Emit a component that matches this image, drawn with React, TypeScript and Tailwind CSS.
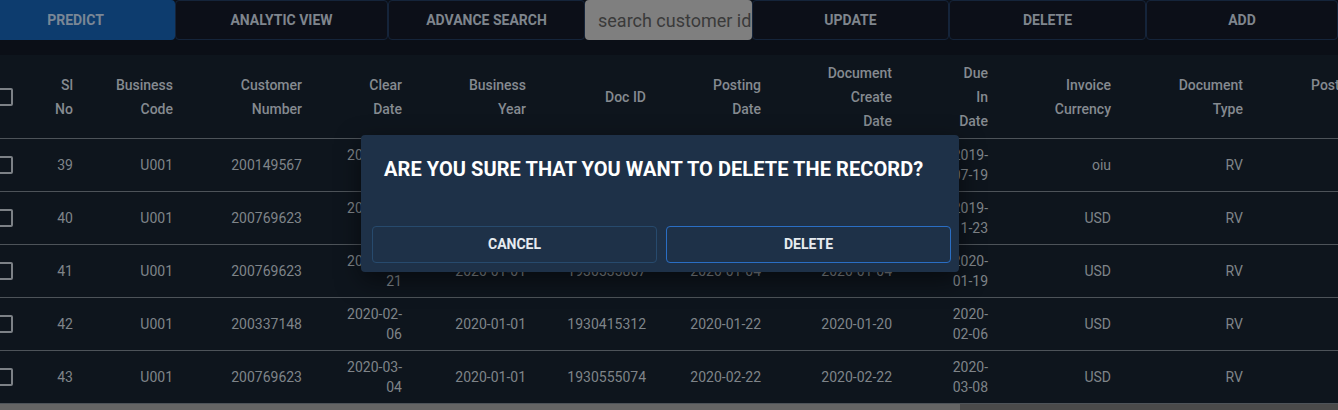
import React from 'react';

type Cell = string | string[];

const widths = ['w-[38px]', 'w-[51px]', 'w-[100px]', 'w-[129px]', 'w-[100px]', 'w-[124px]', 'w-[120px]', 'w-[115px]', 'w-[131px]', 'w-[96px]', 'w-[123px]', 'w-[132px]'];

const headers: Cell[] = [
  ['Sl', 'No'],
  ['Business', 'Code'],
  ['Customer', 'Number'],
  ['Clear', 'Date'],
  ['Business', 'Year'],
  'Doc ID',
  ['Posting', 'Date'],
  ['Document', 'Create', 'Date'],
  ['Due', 'In', 'Date'],
  ['Invoice', 'Currency'],
  ['Document', 'Type'],
];

const rows: Cell[][] = [
  ['39', 'U001', '200149567', ['2020-01-', '02'], '2019-01-01', '1929649847', '2019-07-04', '2019-07-04', ['2019-', '07-19'], 'oiu', 'RV'],
  ['40', 'U001', '200769623', ['2020-01-', '09'], '2019-01-01', '1930165441', '2019-11-13', '2019-11-08', ['2019-', '11-23'], 'USD', 'RV'],
  ['41', 'U001', '200769623', ['2020-01-', '21'], '2020-01-01', '1930535867', '2020-01-04', '2020-01-04', ['2020-', '01-19'], 'USD', 'RV'],
  ['42', 'U001', '200337148', ['2020-02-', '06'], '2020-01-01', '1930415312', '2020-01-22', '2020-01-20', ['2020-', '02-06'], 'USD', 'RV'],
  ['43', 'U001', '200769623', ['2020-03-', '04'], '2020-01-01', '1930555074', '2020-02-22', '2020-02-22', ['2020-', '03-08'], 'USD', 'RV'],
];

function Lines({ value }: { value: Cell }) {
  const list = Array.isArray(value) ? value : [value];
  return (
    <>
      {list.map((l, i) => (
        <div key={i}>{l}</div>
      ))}
    </>
  );
}

function CheckBox() {
  return <div className="w-[18px] h-[18px] -ml-[5px] rounded-[2px] border-2 border-[#7c8186]" />;
}

export default function App() {
  const btn = 'bg-[#0c0f18] border border-[#15243a] rounded-[4px] text-[14px] font-bold text-[#7f858d]';

  return (
    <div className="relative w-[1338px] h-[410px] overflow-hidden bg-[#0b0f17]" style={{ fontFamily: 'Roboto, "Liberation Sans", sans-serif' }}>
      {/* toolbar */}
      <div className="flex h-[40px]">
        <button className="w-[175px] pr-[24px] bg-[#0d3c6e] rounded-r-[4px] text-[14px] font-bold text-[#7a8796]">PREDICT</button>
        <button className={`w-[213px] ${btn}`}>ANALYTIC VIEW</button>
        <button className={`w-[197px] ${btn}`}>ADVANCE SEARCH</button>
        <div className="w-[167px] bg-[#7f7f7f] rounded-[4px] flex items-center pl-[13px] overflow-hidden">
          <span className="text-[18px] text-[#3a3a3a] whitespace-nowrap">search customer id</span>
        </div>
        <button className={`w-[197px] ${btn}`}>UPDATE</button>
        <button className={`w-[197px] ${btn}`}>DELETE</button>
        <button className={`flex-1 ${btn}`}>ADD</button>
      </div>

      {/* table */}
      <div className="mt-[15px] bg-[#0e151d] text-[14px]">
        <div className="flex h-[84px] items-center border-b border-[#4d5359] font-medium text-[#858a90] leading-[24px]">
          <div className={`${widths[0]} shrink-0`}>
            <CheckBox />
          </div>
          {headers.map((h, i) => (
            <div key={i} className={`${widths[i + 1]} shrink-0 text-right pr-[16px]`}>
              <Lines value={h} />
            </div>
          ))}
          <div className="w-[116px] shrink-0 text-right pr-[16px]">
            <div>Posting</div>
            <div>Id</div>
          </div>
        </div>
        {rows.map((r, ri) => (
          <div key={ri} className="flex h-[53px] items-center border-b border-[#4d5359] text-[#7f8489] leading-[20px]">
            <div className={`${widths[0]} shrink-0`}>
              <CheckBox />
            </div>
            {r.map((c, i) => (
              <div key={i} className={`${widths[i + 1]} shrink-0 text-right pr-[16px] whitespace-nowrap`}>
                <Lines value={c} />
              </div>
            ))}
          </div>
        ))}
      </div>

      {/* horizontal scrollbar */}
      <div className="absolute left-0 right-0 bottom-0 h-[6px] bg-[#4a4a4a]">
        <div className="h-full w-[960px] bg-[#646464]" />
      </div>

      {/* delete confirmation dialog */}
      <div className="absolute left-[361px] top-[135px] w-[598px] h-[137px] bg-[#1e3148] rounded-[4px] shadow-[0_8px_24px_rgba(0,0,0,0.5)] flex flex-col">
        <div className="pl-[23px] pt-[21px] text-[20px] font-bold text-white leading-[26px] tracking-[0.07px]">
          ARE YOU SURE THAT YOU WANT TO DELETE THE RECORD?
        </div>
        <div className="mt-auto mb-[9px] pl-[11px] pr-[8px] flex gap-[9px]">
          <button className="flex-1 h-[37px] rounded-[4px] border border-[#274a6d] text-[14px] font-bold text-[#e6ebf0]">CANCEL</button>
          <button className="flex-1 h-[37px] rounded-[4px] border border-[#2a6ec4] text-[14px] font-bold text-[#e6ebf0]">DELETE</button>
        </div>
      </div>
    </div>
  );
}
